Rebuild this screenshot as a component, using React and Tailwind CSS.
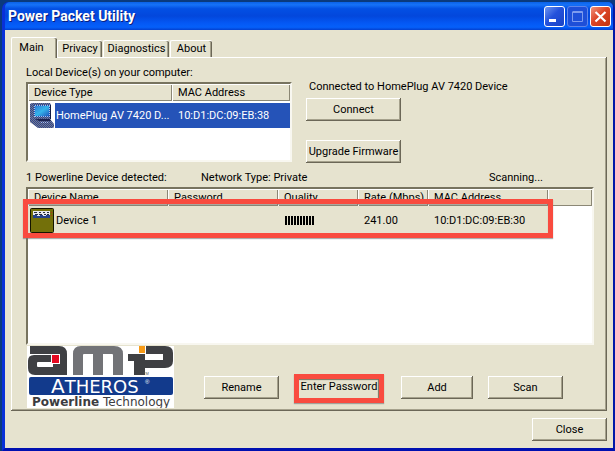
import React from 'react';

const RAISED =
  'bg-[#e6e3cf] shadow-[inset_-1px_-1px_0_#6b6757,inset_1px_1px_0_#ffffff,inset_-2px_-2px_0_#a5a18c]';

function PushButton({ children, className = '' }) {
  return (
    <button
      type="button"
      className={`h-[23px] shrink-0 text-center whitespace-nowrap ${RAISED} ${className}`}
    >
      {children}
    </button>
  );
}

function Tab({ children, selected, className }) {
  return (
    <button
      type="button"
      role="tab"
      aria-selected={selected}
      className={`rounded-t-[2px] border-t border-l border-white bg-[#e6e3cf] text-center shadow-[inset_-1px_0_0_#6b6757,inset_-2px_0_0_#a5a18c] ${
        selected ? 'relative -mb-px h-[21px] pb-px' : 'h-[17px]'
      } ${className}`}
    >
      {children}
    </button>
  );
}

function HeaderCell({ children }) {
  return (
    <th
      scope="col"
      className="h-[17px] overflow-hidden bg-[#e6e3cf] p-0 pl-1.5 text-left font-normal whitespace-nowrap shadow-[inset_1px_1px_0_#ffffff,inset_-1px_-1px_0_#8b8775]"
    >
      {children}
    </th>
  );
}

function CaptionButton({ label, className, children }) {
  return (
    <button
      type="button"
      aria-label={label}
      className={`flex size-[21px] items-center justify-center rounded-[3px] border ${className}`}
    >
      <svg viewBox="0 0 19 19" className="size-[19px]" aria-hidden="true">
        {children}
      </svg>
    </button>
  );
}

function ComputerIcon() {
  return (
    <svg viewBox="0 0 24 25" className="block h-[25px] w-[24px] shrink-0" aria-hidden="true">
      <defs>
        <linearGradient id="screen" x1="0" y1="0" x2="1" y2="1">
          <stop offset="0" stopColor="#2f7fd6" />
          <stop offset="0.5" stopColor="#35b4ea" />
          <stop offset="1" stopColor="#1f5cc0" />
        </linearGradient>
        <pattern id="shade" width="2" height="2" patternUnits="userSpaceOnUse">
          <rect width="2" height="2" fill="#2c4590" />
          <rect width="1" height="1" fill="#77798c" />
          <rect x="1" y="1" width="1" height="1" fill="#77798c" />
        </pattern>
      </defs>
      <path d="M0 1l2-1h18l1 2v14H3l-3-2z" fill="url(#shade)" />
      <rect x="4" y="2" width="16" height="12" fill="#1c4fb4" />
      <rect x="5" y="3" width="14" height="10" fill="url(#screen)" />
      <path d="M5 2.5h15M4.5 3v11M5 13.5h15M19.5 3v11" fill="none" stroke="#a9c4ea" strokeDasharray="1 1" />
      <path d="M20 2h1v14h-1z" fill="#131c44" />
      <path d="M0 14l4 2h16l4 5v3l-1 1H8l-8-6z" fill="url(#shade)" />
      <path d="M5 16h15l1 2H9z" fill="#1b2350" />
      <path d="M11 19.5h8" stroke="#b9c0dc" strokeDasharray="1 1" />
    </svg>
  );
}

function AdapterIcon() {
  return (
    <svg viewBox="0 0 24 25" className="block h-[25px] w-[24px] shrink-0" aria-hidden="true">
      <rect x="0.5" y="0.5" width="23" height="24" rx="1" fill="#73700a" stroke="#141400" />
      <rect x="3" y="3" width="17" height="6" fill="#e8eaf0" />
      <path d="M3 7h4v1h3v-1h3v1h3v-1h4v3H3z" fill="#24418a" />
      <path d="M4 4.5h3M5 6.5h3M9 4.5h2M9 6.5h3M13 4.5h2M14 6.5h2M17 4.5h2M17 6.5h2" stroke="#252b3c" />
      <path d="M21.5 4v1M21.5 7v1" stroke="#b52c18" />
    </svg>
  );
}

function Logo() {
  return (
    <svg
      viewBox="0 0 147 62"
      className="mt-px h-[62px] w-[147px] shrink-0"
      role="img"
      aria-label="AMP Atheros Powerline Technology"
    >
      <rect width="147" height="62" fill="#fff" />
      <path d="M3 0H32Q40 0 40 8V29H8Q1 29 1 22V15Q1 9 7 9H31V8H3z" fill="#3f4043" />
      <path d="M11 16h15v5H11q-1 0-1-1v-3q0-1 1-1z" fill="#fff" />
      <rect x="24" y="8" width="9" height="10" fill="#fff" />
      <rect x="25" y="9" width="7" height="8" fill="#e50920" />
      <path
        d="M46 29V8Q46 0 54 0H87Q96 0 96 8V29H86V9Q86 8 85 8H76V29H66V8H57Q56 8 56 9V29z"
        fill="#727377"
      />
      <path d="M101 8H118V14H136V8H119V0H138Q146 0 146 7V15Q146 22 138 22H118V29H107V15H101z" fill="#3f4043" />
      <rect x="112" y="0" width="6" height="7" fill="#f79a16" />
      <text x="116" y="29" className="fill-[#555] font-['Liberation_Sans',sans-serif] text-[4px]">TM</text>
      <rect x="2" y="31" width="144" height="18" rx="2" fill="#123a8c" />
      <text x="24" y="47" fill="#fff" className="font-['DejaVu_Sans',sans-serif]">
        <tspan className="text-[20px]">A</tspan>
        <tspan className="text-[18px]">THEROS</tspan>
      </text>
      <text x="118" y="38" fill="#fff" className="font-['Liberation_Sans',sans-serif] text-[6px]">®</text>
      <text x="5" y="60" fill="#3c3c40" className="font-['DejaVu_Sans',sans-serif] text-[12px] font-bold">Powerline</text>
      <text x="76" y="60" fill="#3c3c40" className="font-['DejaVu_Sans',sans-serif] text-[12px]">Technology</text>
    </svg>
  );
}

const SUNKEN =
  'border-2 border-t-[#77735f] border-l-[#77735f] border-r-[#f8f7f0] border-b-[#f8f7f0] bg-white';

export default function App() {
  return (
    <div className="bg-[#0a3a7e] pt-[2px] pl-[2px] font-['Roboto','Liberation_Sans',sans-serif] text-[11px] leading-[14px] text-black">
      <main className="rounded-t-[7px] border-r-2 border-b-[3px] border-l-[3px] border-[#0831d9] border-r-[#0019a8] border-b-[#0010b0] bg-[#0831d9]">
        <header className="flex h-7 items-center justify-between rounded-t-[5px] bg-[linear-gradient(180deg,#0a62e8_0%,#1672f8_10%,#0350e4_24%,#0347dc_50%,#0458f4_75%,#0560fa_90%,#0340d0_100%)] pr-0.5 pl-[3px]">
          <h1 className="text-[14px] font-bold text-white [text-shadow:1px_1px_0_#0a1f7c]">
            Power Packet Utility
          </h1>
          <div className="flex gap-0.5">
            <CaptionButton label="Minimize" className="border-white bg-[linear-gradient(135deg,#6f96f0,#2452dc_45%,#1a43c4)]">
              <rect x="4" y="12" width="7" height="3" fill="#fff" />
            </CaptionButton>
            <CaptionButton label="Maximize" className="border-[#5f86ea] bg-[#1e4fd8]">
              <path d="M4.5 5v9.500h10V4.500h-10M4 5.500h11" fill="none" stroke="#7d9bee" />
            </CaptionButton>
            <CaptionButton label="Close window" className="border-white bg-[linear-gradient(135deg,#f0917a,#dc4526_45%,#c23310)]">
              <path d="M4.5 5l10 9.500M14.500 5l-10 9.500" stroke="#fff" strokeWidth="2.200" />
            </CaptionButton>
          </div>
        </header>

        <div className="bg-[#e6e3cf] px-1.5 py-[7px]">
          <div role="tablist" className="flex items-end">
            <Tab selected className="w-[46px] pr-[6px]">Main</Tab>
            <Tab className="w-[45px]">Privacy</Tab>
            <Tab className="ml-px w-[66px]">Diagnostics</Tab>
            <Tab className="ml-px w-[42px]">About</Tab>
          </div>

          <section className={`h-[354px] pt-[9px] pr-[13px] pl-[15px] ${RAISED}`}>
            <div className="flex gap-[14px]">
              <div className="w-[266px] shrink-0">
                <p className="h-4">Local Device(s) on your computer:</p>
                <div className={`h-[80px] ${SUNKEN}`}>
                  <table className="w-full table-fixed border-collapse">
                    <colgroup>
                      <col className="w-[144px]" />
                      <col />
                    </colgroup>
                    <thead>
                      <tr>
                        <HeaderCell>Device Type</HeaderCell>
                        <HeaderCell>MAC Address</HeaderCell>
                      </tr>
                    </thead>
                    <tbody className="text-white">
                      <tr>
                        <td className="p-0 pt-[2px]">
                          <div className="flex items-center gap-px pl-[2px]">
                            <ComputerIcon />
                            <span className="h-[25px] grow bg-[#2553b8] pl-px leading-[25px] whitespace-nowrap">
                              HomePlug AV 7420 D...
                            </span>
                          </div>
                        </td>
                        <td className="p-0 pt-[2px]">
                          <div className="h-[25px] bg-[#2553b8] pl-1.5 leading-[25px]">10:D1:DC:09:EB:38</div>
                        </td>
                      </tr>
                    </tbody>
                  </table>
                </div>
              </div>

              <div className="flex flex-col items-start pt-[14px]">
                <p className="pl-[3px] whitespace-nowrap">Connected to HomePlug AV 7420 Device</p>
                <PushButton className="mt-1 w-[95px]">Connect</PushButton>
                <PushButton className="mt-[19px] w-[95px]">Upgrade Firmware</PushButton>
              </div>
            </div>

            <div className="mt-2 flex h-4">
              <p className="w-[175px]">1 Powerline Device detected:</p>
              <p className="grow">Network Type: Private</p>
              <p className="pr-[51px]">Scanning...</p>
            </div>

            <div className={`relative h-[158px] ${SUNKEN}`}>
              <table className="w-full table-fixed border-collapse">
                <colgroup>
                  <col className="w-[140px]" />
                  <col className="w-[110px]" />
                  <col className="w-[80px]" />
                  <col className="w-[70px]" />
                  <col className="w-[120px]" />
                  <col />
                </colgroup>
                <thead>
                  <tr>
                    <HeaderCell>Device Name</HeaderCell>
                    <HeaderCell>Password</HeaderCell>
                    <HeaderCell>Quality</HeaderCell>
                    <HeaderCell>Rate (Mbps)</HeaderCell>
                    <HeaderCell>MAC Address</HeaderCell>
                    <HeaderCell />
                  </tr>
                </thead>
                <tbody>
                  <tr className="h-[28px]">
                    <td className="bg-[#e6e3cf] p-0">
                      <div className="flex items-center gap-[2px] pt-px pl-[2px]">
                        <AdapterIcon />
                        Device 1
                      </div>
                    </td>
                    <td className="bg-[#e6e3cf]" />
                    <td className="bg-[#e6e3cf] p-0 pl-[7px]">
                      <div role="img" aria-label="10 of 10 bars" className="flex gap-px">
                        {Array.from({ length: 10 }, (_, i) => (
                          <span key={i} className="h-[9px] w-[2px] bg-black" />
                        ))}
                      </div>
                    </td>
                    <td className="bg-[#e6e3cf] p-0 pt-px pl-1.5">241.00</td>
                    <td className="bg-[#e6e3cf] p-0 pt-px pl-1.5">10:D1:DC:09:EB:30</td>
                    <td />
                  </tr>
                </tbody>
              </table>
              <div className="pointer-events-none absolute top-[10px] -left-[5px] h-[39px] w-[530px] border-[5px] border-[#f94b3f] shadow-[0_1px_1px_#77777799,inset_0_1px_1px_#77777799]" />
            </div>

            <div className="flex items-start pl-px">
              <Logo />
              <PushButton className="mt-[31px] ml-[30px] w-[75px]">Rename</PushButton>
              <div className="mt-[29px] ml-[15px] h-[29px] w-[90px] border-[5px] border-[#f94b3f] shadow-[0_1px_1px_#77777799]">
                <button
                  type="button"
                  className="flex h-[19px] w-full items-start justify-center pt-px whitespace-nowrap shadow-[inset_-1px_1px_1px_#77735f]"
                >
                  Enter Password
                </button>
              </div>
              <PushButton className="mt-[31px] ml-[17px] w-[72px]">Add</PushButton>
              <PushButton className="mt-[31px] ml-[15px] w-[75px]">Scan</PushButton>
            </div>
          </section>

          <div className="mt-[7px] flex justify-end">
            <PushButton className="w-[75px]">Close</PushButton>
          </div>
        </div>
      </main>
    </div>
  );
}
